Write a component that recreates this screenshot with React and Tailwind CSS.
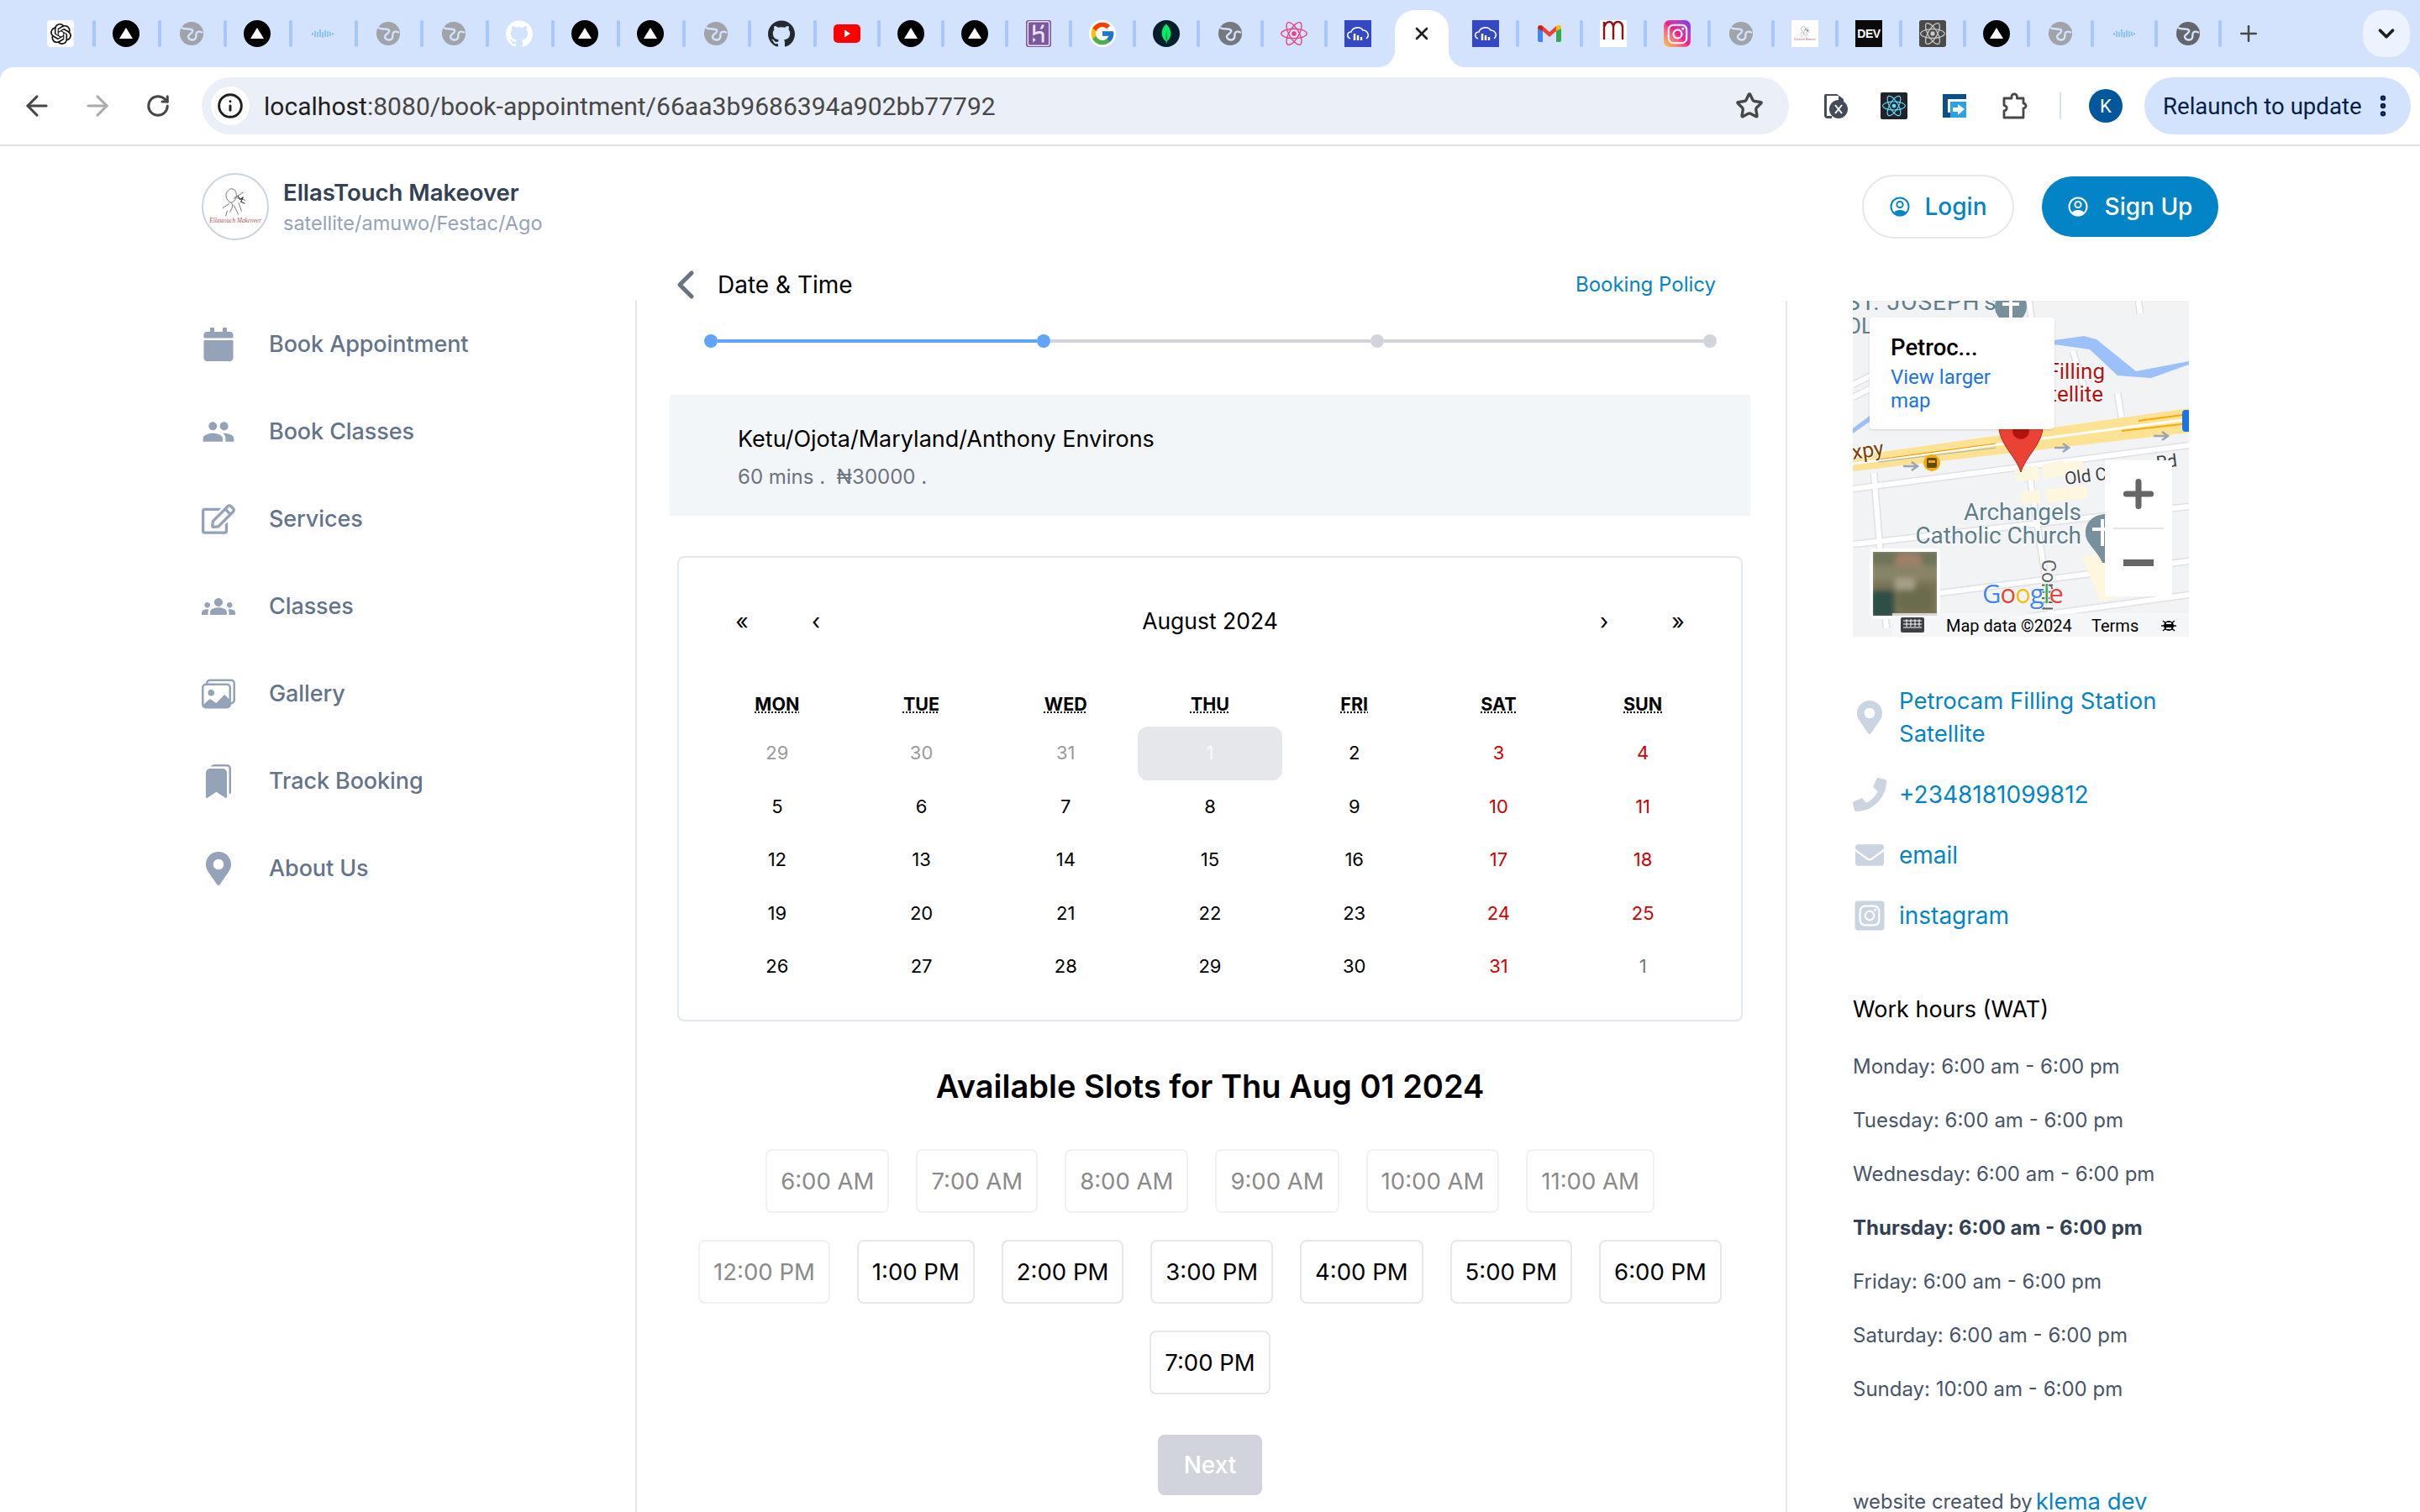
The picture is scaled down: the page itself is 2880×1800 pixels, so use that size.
import React from "react";
import { ArrowLeft, ArrowRight, RotateCw, Star, Info, EllipsisVertical, Plus, ChevronDown, ChevronLeft, X } from "lucide-react";
import { FaCalendar, FaRegEdit, FaMapMarkerAlt, FaPhone, FaEnvelope, FaInstagramSquare, FaReact, FaInstagram } from "react-icons/fa";
import { MdPeople, MdGroups } from "react-icons/md";
import { BsImages, BsBookmarksFill } from "react-icons/bs";
import { SiOpenai, SiGithub, SiHeroku, SiMongodb } from "react-icons/si";
import { FcGoogle } from "react-icons/fc";

const Vercel = () => (
  <svg viewBox="0 0 32 32" className="w-8 h-8"><circle cx="16" cy="16" r="16" fill="#000" /><path d="M16 9 L24 22 H8 Z" fill="#fff" /></svg>
);
const Globe = ({ c = "#a0a3a8" }) => (
  <svg viewBox="0 0 32 32" className="w-8 h-8">
    <circle cx="16" cy="16" r="14" fill={c} />
    <path d="M4 9 C9 12 15 9 17 12 C19 15 11 17 12 20 C13 24 19 25 21 21 C22 18 20 16 23 14 C25 13 27 14 29 15" fill="none" stroke="#d3e3fd" strokeWidth="2.4" />
  </svg>
);
const Wave = () => (
  <svg viewBox="0 0 32 32" className="w-8 h-8">
    <g stroke="#6ab0f7" strokeWidth="1.5" opacity="0.8">
      <path d="M4 15V18M7 13V20M10 14V20M13 11V20M16 14V21M19 12V20M22 13V20M25 14V19M28 15V18" />
    </g>
  </svg>
);
const Cloud = () => (
  <div className="w-8 h-8 bg-[#3448c5] flex items-center justify-center">
    <svg viewBox="0 0 32 32" className="w-8 h-8" fill="none" stroke="#fff" strokeWidth="1.6">
      <path d="M7 22 C2 20 3 14 8 14 C10 8 19 7 22 12 C27 12 31 18 26 22" />
      <path d="M12 16V24M16 18V24M20 20V24" strokeWidth="2.4" />
    </svg>
  </div>
);
const Gmail = () => (
  <svg viewBox="0 0 32 32" className="w-8 h-8">
    <path d="M2 10 V24 Q2 26 4 26 H8 V12 Z" fill="#4285f4" />
    <path d="M30 10 V24 Q30 26 28 26 H24 V12 Z" fill="#34a853" />
    <path d="M2 10 Q2 4 8 7 L16 14 L24 7 V13 L16 20 L8 13 L2 10Z" fill="#ea4335" />
    <path d="M2 10 Q2 5 8 7 V13 Z" fill="#c5221f" />
    <path d="M24 7 Q30 4 30 10 L24 13 Z" fill="#fbbc04" />
  </svg>
);
const YouTube = () => (
  <div className="w-8 h-[22px] rounded-[5px] bg-[#ff0000] flex items-center justify-center">
    <svg viewBox="0 0 12 12" className="w-3 h-3"><path d="M3 1.5 L10 6 L3 10.5Z" fill="#fff" /></svg>
  </div>
);
const LogoArt = () => (
  <svg viewBox="0 0 80 80" className="w-full h-full">
    <g fill="none" stroke="#333" strokeWidth="0.7">
      <path d="M32 19 C26 23 28 33 35 35 C38 39 36 42 33 47 M35 35 C41 33 43 26 40 20 C37 17 34 17 32 19" />
      <path d="M38 30 L50 22 M42 29 L53 32 M44 35 L48 46 M33 36 L24 42 M38 38 L44 50 M30 45 L28 52" />
      <path d="M43 26 L46 31 L50 28 L47 34 L52 36" strokeWidth="1.1" />
    </g>
    <text x="40" y="60" textAnchor="middle" fontFamily="Liberation Serif, serif" fontStyle="italic" fontSize="7.6" fill="#a85a5a">Ellastouch Makeover</text>
  </svg>
);
const UserIcon = () => (
  <svg viewBox="0 0 24 24" className="w-6 h-6 shrink-0" fill="none" stroke="currentColor" strokeWidth="2">
    <circle cx="12" cy="12" r="10.5" />
    <circle cx="12" cy="9.5" r="3.6" />
    <path d="M5 19 C7 15 17 15 19 19 C15.5 23 8.5 23 5 19Z" fill="currentColor" stroke="none" />
  </svg>
);
const PuzzleIcon = () => (
  <svg viewBox="0 0 32 32" className="w-8 h-8" fill="none" stroke="#474747" strokeWidth="2.8" strokeLinejoin="round">
    <path d="M3 7 H12 V5 a3.2 3.2 0 0 1 6.4 0 V7 H26 V13 a3 3 0 0 1 0 6 V30 H3 V22 a3.2 3.2 0 0 0 0 -6.4 Z" />
  </svg>
);

const Insta = () => (
  <div className="w-8 h-8 rounded-[7px] bg-linear-to-tr from-[#fdc830] via-[#f0198c] to-[#7a2cf5] flex items-center justify-center">
    <FaInstagram size={27} color="#fff" />
  </div>
);
const Box = ({ className, children }) => <div className={className}>{children}</div>;

const v = <Vercel />;
const g = <Globe />;
const w = <Wave />;
const firstTabs = [
  <Box className="w-8 h-8 bg-white rounded-[4px] flex items-center justify-center"><SiOpenai size={25} color="#111" /></Box>,
  v, g, v, w, g, g,
  <SiGithub size={32} color="#fff" />,
  v, v, g,
  <SiGithub size={32} color="#24292f" />,
];
const midTabs = [
  <YouTube />, v, v,
  <Box className="w-[30px] h-8 rounded-[3px] bg-[#79589f] flex items-center justify-center"><SiHeroku size={34} color="#e9e2f2" /></Box>,
  <FcGoogle size={32} className="bg-white rounded-full" />,
  <Box className="w-8 h-8 rounded-full bg-[#001e2b] flex items-center justify-center"><SiMongodb size={24} color="#00ed64" /></Box>,
  <Globe c="#75787d" />,
  <FaReact size={32} color="#e8407e" />,
];
const lastTabs = [
  <Cloud />, <Gmail />,
  <Box className="w-8 h-8 bg-white">
    <svg viewBox="0 0 32 32" className="w-8 h-8" fill="none" stroke="#8f1010" strokeWidth="2.4">
      <path d="M5 2 V23 M5 8 C8 0 15 0 16 8 V23 M16 8 C17 0 26 0 27 8 V23" />
    </svg>
  </Box>,
  <Insta />, g,
  <Box className="w-8 h-8 bg-white"><LogoArt /></Box>,
  <Box className="w-8 h-8 bg-[#0a0a0a] flex items-center justify-center"><span className="font-['Liberation_Sans'] font-bold text-white text-[14px] tracking-[-0.5px]">DEV</span></Box>,
  <Box className="w-8 h-8 rounded-[3px] bg-[#4a4a4a] flex items-center justify-center"><FaReact size={30} color="#c9c9c9" /></Box>,
  v, g, w, <Globe c="#63666b" />,
];

function Sep({ ml = "ml-5" }) {
  return <div className={`${ml} mr-5 w-1 h-8 rounded-[2px] bg-[#a8c7fa] shrink-0`} />;
}
function TabIcon({ children }) {
  return <div className="w-8 h-8 shrink-0 flex items-center justify-center">{children}</div>;
}

function TabStrip() {
  return (
    <div className="h-20 flex items-center pl-14">
      {firstTabs.map((t, i) => (
        <React.Fragment key={i}>
          <TabIcon>{t}</TabIcon>
          <Sep ml="ml-[22px]" />
        </React.Fragment>
      ))}
      {midTabs.map((t, i) => (
        <React.Fragment key={i}>
          <TabIcon>{t}</TabIcon>
          <Sep />
        </React.Fragment>
      ))}
      <TabIcon><Cloud /></TabIcon>
      <div className="relative self-end ml-7 mr-7 w-16 h-[68px] bg-white rounded-t-[24px] flex items-start justify-center pt-4 shrink-0">
        <X size={24} strokeWidth={2.6} color="#1f1f1f" />
        <svg viewBox="0 0 20 20" className="absolute -left-5 bottom-0 w-5 h-5"><path d="M20 0 V20 H0 A20 20 0 0 0 20 0Z" fill="#fff" /></svg>
        <svg viewBox="0 0 20 20" className="absolute -right-5 bottom-0 w-5 h-5"><path d="M0 0 V20 H20 A20 20 0 0 1 0 0Z" fill="#fff" /></svg>
      </div>
      {lastTabs.map((t, i) => (
        <React.Fragment key={i}>
          <TabIcon>{t}</TabIcon>
          <Sep />
        </React.Fragment>
      ))}
      <Plus size={30} strokeWidth={2} color="#474747" className="shrink-0 -ml-[3px]" />
      <div className="ml-auto mr-3 self-start mt-3 w-14 h-14 rounded-[24px] bg-[#ecf2fe] flex items-center justify-center shrink-0">
        <ChevronDown size={30} strokeWidth={3} color="#1f1f1f" />
      </div>
    </div>
  );
}

function Toolbar() {
  return (
    <div className="h-[94px] bg-white rounded-t-[16px] border-b-2 border-[#e1e1e1] flex items-center pl-6 font-['Roboto']">
      <div className="w-10 flex justify-center"><ArrowLeft size={38} strokeWidth={1.9} color="#474747" /></div>
      <div className="w-10 ml-8 flex justify-center"><ArrowRight size={38} strokeWidth={1.9} color="#a9abae" /></div>
      <div className="w-10 ml-8 flex justify-center"><RotateCw size={30} strokeWidth={2.4} color="#474747" /></div>
      <div className="ml-8 w-[1889px] h-[68px] rounded-full bg-[#ebeff8] flex items-center pl-[11px] pr-[30px]">
        <div className="w-[46px] h-[46px] rounded-full bg-white flex items-center justify-center">
          <Info size={32} strokeWidth={2.2} color="#1f1f1f" />
        </div>
        <div className="ml-[17px] mt-[1px] text-[30px] tracking-[0.03px] leading-[40px] text-[#474747]"><span className="text-[#1f1f1f]">localhost</span>:8080/book-appointment/66aa3b9686394a902bb77792</div>
        <Star size={34} strokeWidth={2.4} color="#474747" className="ml-auto" />
      </div>
      <div className="ml-[39px] w-8 h-8 flex items-center justify-center">
        <svg viewBox="0 0 32 32" className="w-8 h-8">
          <path d="M4 2 H18 L26 8 V14 H20 L20 4 H6 V28 H12 V31 H7 Q3 31 3 27 V6 Q3 2 4 2Z" fill="#444c5c" />
          <circle cx="20" cy="20" r="11" fill="#444c5c" />
          <path d="M16 15 L24 25 M24 15 L16 25" stroke="#fff" strokeWidth="2" />
        </svg>
      </div>
      <div className="ml-[38px] w-8 h-8 bg-[#20232a] rounded-[2px] flex items-center justify-center"><FaReact size={28} color="#61dafb" /></div>
      <div className="ml-10 w-8 h-8 flex items-center justify-center">
        <svg viewBox="0 0 32 32" className="w-8 h-8">
          <path d="M2 2 H30 V8 H8 V24 H12 V30 H2Z" fill="#0e4f86" />
          <path d="M11 11 H30 V30 H11Z" fill="#2aa3e6" />
          <path d="M14 18 H20 V14 L28 20 L20 27 V23 H14Z" fill="#fff" />
        </svg>
      </div>
      <div className="ml-10 w-8 h-8 flex items-center justify-center"><PuzzleIcon /></div>
      <div className="ml-[37px] w-[2px] h-8 bg-[#d3e3fd]" />
      <div className="ml-[33px] w-10 h-10 rounded-full bg-[#01579b] text-white text-[22px] flex items-center justify-center">K</div>
      <div className="ml-[26px] w-[317px] h-[68px] rounded-full bg-[#d3e3fd] flex items-center pl-[22px] text-[27.6px] text-[#041e49]">
        <span className="mt-[1px]">Relaunch to update</span>
        <EllipsisVertical size={32} strokeWidth={2.8} color="#041e49" className="ml-[9px]" />
      </div>
    </div>
  );
}

const navItems = [
  ["Book Appointment", <FaCalendar size={40} />],
  ["Book Classes", <MdPeople size={40} />],
  ["Services", <FaRegEdit size={40} />],
  ["Classes", <MdGroups size={40} />],
  ["Gallery", <BsImages size={40} />],
  ["Track Booking", <BsBookmarksFill size={40} />],
  ["About Us", <FaMapMarkerAlt size={40} />],
];

function Sidebar() {
  return (
    <div className="w-[518px] shrink-0 border-r-2 border-[#e5e7eb]">
      {navItems.map(([t, ic]) => (
        <div key={t} className="h-[104px] flex items-center">
          <div className="w-10 flex justify-center text-[#94a3b8]">{ic}</div>
          <span className="ml-10 mt-[1px] text-[27px] tracking-[-0.1px] font-medium text-[#64748b]">{t}</span>
        </div>
      ))}
    </div>
  );
}

const weekdays = ["MON", "TUE", "WED", "THU", "FRI", "SAT", "SUN"];
const days = [29, 30, 31, 1, 2, 3, 4, 5, 6, 7, 8, 9, 10, 11, 12, 13, 14, 15, 16, 17, 18, 19, 20, 21, 22, 23, 24, 25, 26, 27, 28, 29, 30, 31, 1];

function dayClass(i) {
  if (i < 3) return "text-[#9a9a9a]";
  if (i === 3) return "text-[#f9fafb] bg-[#e5e7eb] rounded-[12px]";
  if (i === 34) return "text-[#757575]";
  if (i % 7 >= 5) return "text-[#d10000]";
  return "text-black";
}

function Calendar() {
  return (
    <div className="ml-12 w-[1268px] h-[554px] border-2 border-[#e2e8f0] rounded-[8px] px-[31px] pt-12">
      <div className="h-14 flex items-center text-[26.5px] text-black">
        <div className="w-[88px] text-center">«</div>
        <div className="w-[88px] text-center">‹</div>
        <div className="flex-1 text-center">August 2024</div>
        <div className="w-[88px] text-center">›</div>
        <div className="w-[88px] text-center">»</div>
      </div>
      <div className="mt-[50px] grid grid-cols-7 h-10 items-center text-center">
        {weekdays.map((d) => (
          <abbr key={d} title={d} className="text-[21.5px] font-bold text-black underline decoration-dotted">{d}</abbr>
        ))}
      </div>
      <div className="mt-[7px] grid grid-cols-7 auto-rows-[63.5px]">
        {days.map((d, i) => (
          <div key={i} className={`flex items-center justify-center text-[22px] ${dayClass(i)}`}>{d}</div>
        ))}
      </div>
    </div>
  );
}

const slots = [
  ["6:00 AM", 1], ["7:00 AM", 1], ["8:00 AM", 1], ["9:00 AM", 1], ["10:00 AM", 1], ["11:00 AM", 1],
  ["12:00 PM", 1], ["1:00 PM", 0], ["2:00 PM", 0], ["3:00 PM", 0], ["4:00 PM", 0], ["5:00 PM", 0], ["6:00 PM", 0], ["7:00 PM", 0],
];

function Center() {
  return (
    <div className="w-[1369px] shrink-0 border-r-2 border-[#e5e7eb]">
      <div className="ml-20 w-[1205px] mt-10 h-4 flex items-center">
        <div className="w-4 h-4 rounded-full bg-[#60a5fa] shrink-0" />
        <div className="flex-1 h-1 bg-[#60a5fa]" />
        <div className="w-4 h-4 rounded-full bg-[#60a5fa] shrink-0" />
        <div className="flex-1 h-1 bg-[#d1d5db]" />
        <div className="w-4 h-4 rounded-full bg-[#d1d5db] shrink-0" />
        <div className="flex-1 h-1 bg-[#d1d5db]" />
        <div className="w-4 h-4 rounded-full bg-[#d1d5db] shrink-0" />
      </div>
      <div className="ml-[39px] mt-14 w-[1286px] h-[144px] bg-[#f3f6f9] pl-[81px] pt-[34px]">
        <div className="text-[27px] leading-[38px] text-black">Ketu/Ojota/Maryland/Anthony Environs</div>
        <div className="mt-[7px] text-[24px] leading-[38px] text-[#6b7280] whitespace-pre">60 mins .  ₦30000 .</div>
      </div>
      <div className="mt-12"><Calendar /></div>
      <div className="ml-12 w-[1268px] mt-[49px] h-14 flex items-center justify-center text-[38px] font-semibold text-black">Available Slots for Thu Aug 01 2024</div>
      <div className="ml-16 w-[1236px] mt-[47px] flex flex-wrap justify-center gap-x-8 gap-y-8">
        {slots.map(([t, dis]) =>
          dis ? (
            <div key={t} className="h-[76px] px-4 pt-[1px] border-2 border-[#f0f1f3] rounded-[8px] flex items-center text-[27.5px] text-[#8a8a8a]">{t}</div>
          ) : (
            <div key={t} className="h-[76px] px-4 pt-[1px] border-2 border-[#e5e7eb] rounded-[8px] flex items-center text-[27.5px] text-black">{t}</div>
          )
        )}
      </div>
      <div className="mt-12 ml-[620px] w-[124px] h-[72px] rounded-[8px] bg-[#d1d5db] flex items-center justify-center text-[28px] font-medium text-white">Next</div>
    </div>
  );
}

function MapBox() {
  return (
    <div className="relative w-[400px] h-[400px] overflow-hidden bg-[#f1f3f4] font-['Roboto']">
      <svg viewBox="0 0 400 400" className="absolute inset-0 w-[400px] h-[400px]" fontFamily="Roboto, sans-serif">
        <defs>
          <filter id="sat"><feGaussianBlur stdDeviation="3" /></filter>
          <clipPath id="satclip"><rect x="24" y="299" width="76" height="76" /></clipPath>
        </defs>
        <g fill="none" stroke="#dfe1e5" strokeWidth="9">
          <path d="M0 224 L400 172" /><path d="M210 0 L215 45 L170 62 L60 70 L0 100" /><path d="M262 60 L280 120" />
          <path d="M25 205 L40 390" /><path d="M0 290 L400 245" /><path d="M50 355 L400 310" /><path d="M110 390 L400 350" />
          <path d="M210 205 L240 400" /><path d="M0 115 L20 105" /><path d="M340 0 L342 15" /><path d="M315 110 L320 140" />
        </g>
        <g fill="none" stroke="#fff" strokeWidth="6">
          <path d="M0 224 L400 172" /><path d="M210 0 L215 45 L170 62 L60 70 L0 100" /><path d="M262 60 L280 120" />
          <path d="M25 205 L40 390" /><path d="M0 290 L400 245" /><path d="M50 355 L400 310" /><path d="M110 390 L400 350" />
          <path d="M210 205 L240 400" /><path d="M0 115 L20 105" /><path d="M340 0 L342 15" /><path d="M315 110 L320 140" />
        </g>
        <g fill="#fef7e0">
          <path d="M192 200 L220 196 L222 213 L195 215Z" /><path d="M225 195 L250 190 L252 193 L273 190 L275 205 L228 212Z" />
          <path d="M198 227 L222 225 L224 240 L202 242Z" /><path d="M228 225 L278 220 L280 235 L232 240Z" />
          <path d="M272 305 L300 300 L320 352 L295 358Z" />
        </g>
        <path d="M240 47 L275 42 L290 46 L337 84 L400 72 L400 76 L355 92 L315 89 L282 58 L240 52Z" fill="#9cc0f9" />
        <path d="M0 152 L20 137 L20 144 L0 158Z" fill="#9cc0f9" />
        <path d="M0 185 L400 128 L400 157 L0 203Z" fill="#fde293" />
        <path d="M0 194 L400 141" stroke="#fff" strokeWidth="3" fill="none" />
        <path d="M30 189 L170 170" stroke="#f29900" strokeWidth="1.2" fill="none" />
        <path d="M30 192 L170 175" stroke="#aaa" strokeWidth="1" fill="none" />
        <path d="M340 143 L400 135 M320 155 L400 146" stroke="#f9ab00" strokeWidth="2" fill="none" />
        <g stroke="#9aa5b1" strokeWidth="2.5" fill="none">
          <path d="M60 197 H76 M70 192 L77 197 L70 202" /><path d="M240 175 H256 M250 170 L257 175 L250 180" /><path d="M358 161 H374 M368 156 L375 161 L368 166" />
        </g>
        <circle cx="94" cy="193" r="10" fill="#f9ab00" />
        <rect x="88" y="187" width="12" height="12" rx="2" fill="#5f4b00" />
        <rect x="90" y="190" width="8" height="3" fill="#f9ab00" />
        <path d="M174 150 H226 C226 170 206 185 200 204 C194 185 174 170 174 150Z" fill="#ea4335" stroke="#b3261e" strokeWidth="1" />
        <circle cx="200" cy="155" r="10" fill="#b3140e" />
        <rect x="392" y="130" width="10" height="26" rx="4" fill="#1a73e8" />
        <text x="-8" y="11" fontSize="28" fill="#607d8b" letterSpacing="1">ST. JOSEPH's</text>
        <circle cx="188" cy="7" r="19" fill="#78909c" /><path d="M188 -8 V20 M178 4 H198" stroke="#fff" strokeWidth="4" />
        <text x="-8" y="39" fontSize="26" fill="#607d8b">OL</text>
        <text x="300" y="93" textAnchor="end" fontSize="26" fill="#b31412" stroke="#fff" strokeWidth="2" paintOrder="stroke">Filling</text>
        <text x="298" y="120" textAnchor="end" fontSize="26" fill="#b31412" stroke="#fff" strokeWidth="2" paintOrder="stroke">Satellite</text>
        <text x="0" y="189" fontSize="25" fill="#7b4000" stroke="#fff" strokeWidth="2" paintOrder="stroke" transform="rotate(-8 0 189)">xpy</text>
        <text x="253" y="219" fontSize="21" fill="#3c4043" stroke="#fff" strokeWidth="2" paintOrder="stroke" transform="rotate(-7 253 219)">Old Corn</text>
        <text x="362" y="200" fontSize="21" fill="#3c4043" transform="rotate(-7 362 200)">Rd</text>
        <text x="272" y="261" textAnchor="end" fontSize="28" fill="#5b7d8c" stroke="#fff" strokeWidth="2" paintOrder="stroke">Archangels</text>
        <text x="272" y="289" textAnchor="end" fontSize="28" fill="#5b7d8c" stroke="#fff" strokeWidth="2" paintOrder="stroke">Catholic Church</text>
        <path d="M302 254 C286 254 276 264 277 278 C278 290 290 296 297 312 L302 312Z M302 254 H306 V310 H302Z" fill="#78909c" />
        <path d="M297 260 V292 M285 272 H305" stroke="#fff" strokeWidth="4" />
        <text x="225" y="308" fontSize="23" fill="#5f6368" stroke="#fff" strokeWidth="2" paintOrder="stroke" transform="rotate(90 225 308)">Cornu</text>
        <rect x="20" y="295" width="84" height="84" rx="4" fill="#fff" />
        <g clipPath="url(#satclip)">
          <g filter="url(#sat)">
            <rect x="20" y="295" width="84" height="84" fill="#7a7356" />
            <rect x="20" y="295" width="84" height="20" fill="#6e7458" />
            <rect x="50" y="300" width="32" height="24" rx="8" fill="#a07f68" />
            <rect x="20" y="315" width="84" height="18" fill="#888468" />
            <rect x="20" y="344" width="30" height="35" rx="6" fill="#2f4f44" />
            <rect x="54" y="340" width="40" height="30" rx="8" fill="#6a6c4e" />
            <rect x="50" y="330" width="24" height="14" rx="4" fill="#a59f86" />
          </g>
        </g>
        <text x="154" y="360" fontSize="31" fontFamily="Open Sans, sans-serif" stroke="#fff" strokeWidth="2" paintOrder="stroke" letterSpacing="-1">
          <tspan fill="#4285f4">G</tspan><tspan fill="#ea4335">o</tspan><tspan fill="#fbbc04">o</tspan><tspan fill="#4285f4">g</tspan><tspan fill="#34a853">l</tspan><tspan fill="#ea4335">e</tspan>
        </text>
        <rect x="47" y="372" width="353" height="28" fill="#f6f7f8" fillOpacity="0.75" />
        <rect x="57" y="377" width="28" height="18" rx="2" fill="#3c4043" />
        <path d="M60 381 H82 M60 385 H82 M60 389 H82 M64 379 V388 M69 379 V388 M74 379 V388 M79 379 V388" stroke="#fff" strokeWidth="1" />
        <text x="111" y="394" fontSize="20" fill="#000">Map data ©2024</text>
        <text x="284" y="394" fontSize="20" fill="#000">Terms</text>
        <circle cx="376" cy="387" r="6" fill="#000" />
        <path d="M369 381 L383 393 M383 381 L369 393 M367 387 H385" stroke="#000" strokeWidth="1.5" />
        <rect x="373" y="383" width="6" height="2" fill="#fff" /><rect x="373" y="389" width="6" height="2" fill="#fff" />
      </svg>
      <div className="absolute left-5 top-5 w-[220px] h-[133px] bg-white rounded-[4px] pl-[25px] pt-[21px] shadow-sm">
        <div className="text-[27.5px] leading-[30px] font-medium text-black">Petroc...</div>
        <div className="mt-[6px] w-[130px] text-[24px] leading-[28px] text-[#1a73e8]">View larger map</div>
      </div>
      <div className="absolute left-[300px] top-[190px] w-20 h-[162px] bg-white flex flex-col items-center">
        <div className="h-20 flex items-center justify-center"><Plus size={50} strokeWidth={3.4} color="#666" /></div>
        <div className="w-[60px] h-[2px] bg-[#e6e6e6]" />
        <div className="flex-1 flex items-center justify-center"><div className="w-9 h-2 bg-[#666]" /></div>
      </div>
    </div>
  );
}

const hours = [
  ["Monday: 6:00 am - 6:00 pm"], ["Tuesday: 6:00 am - 6:00 pm"], ["Wednesday: 6:00 am - 6:00 pm"], ["Thursday: 6:00 am - 6:00 pm", 1],
  ["Friday: 6:00 am - 6:00 pm"], ["Saturday: 6:00 am - 6:00 pm"], ["Sunday: 10:00 am - 6:00 pm"],
];

function RightCol() {
  return (
    <div className="pl-[78px] flex-1">
      <MapBox />
      <div className="mt-[57px] h-[78px] flex items-center gap-[15px]">
        <div className="w-10 flex justify-center text-[#cbd5e1]"><FaMapMarkerAlt size={40} /></div>
        <div className="text-[27.5px] leading-[39px] text-[#0284c7] w-[320px]">Petrocam Filling Station Satellite</div>
      </div>
      <div className="mt-[33px] h-10 flex items-center gap-[15px]">
        <div className="w-10 flex justify-center text-[#cbd5e1]"><FaPhone size={40} /></div>
        <div className="text-[28px] text-[#0284c7]">+2348181099812</div>
      </div>
      <div className="mt-8 h-10 flex items-center gap-[15px]">
        <div className="w-10 flex justify-center text-[#cbd5e1]"><FaEnvelope size={34} /></div>
        <div className="text-[28px] text-[#0284c7]">email</div>
      </div>
      <div className="mt-8 h-10 flex items-center gap-[15px]">
        <div className="w-10 flex justify-center text-[#cbd5e1]"><FaInstagramSquare size={40} /></div>
        <div className="text-[28px] text-[#0284c7]">instagram</div>
      </div>
      <div className="mt-[72px] h-10 flex items-center text-[27px] text-black">Work hours (WAT)</div>
      <div className="mt-4">
        {hours.map(([t, b]) => (
          <div key={t} className={b ? "h-16 flex items-center text-[24px] font-bold text-[#334155]" : "h-16 flex items-center text-[24px] text-[#475569]"}>{t}</div>
        ))}
      </div>
      <div className="mt-[82px] h-10 flex items-center gap-[4px] text-[23.8px] text-[#475569]">
        website created by <span className="text-[27.5px] text-[#0284c7]">klema dev</span>
      </div>
    </div>
  );
}

export default function App() {
  return (
    <div className="w-[2880px] h-[1800px] overflow-hidden bg-white font-['Inter'] flex flex-col">
      <div className="bg-[#d3e3fd]">
        <TabStrip />
        <Toolbar />
      </div>
      <div className="h-[136px] shrink-0 pl-60 pr-60 pt-8">
        <div className="h-20 flex items-center">
          <div className="w-20 h-20 rounded-full border-2 border-[#cbd5e1] overflow-hidden"><LogoArt /></div>
          <div className="ml-[17px] pt-[2px]">
            <div className="text-[27.5px] leading-[36px] font-semibold text-[#334155]">EllasTouch Makeover</div>
            <div className="text-[23.5px] leading-[37px] text-[#94a3b8]">satellite/amuwo/Festac/Ago</div>
          </div>
          <div className="ml-auto h-[76px] w-[181px] rounded-full border-2 border-[#e5e7eb] flex items-center justify-center gap-[18px] text-[28px] font-medium text-[#0284c7]">
            <UserIcon />Login
          </div>
          <div className="ml-[33px] h-[72px] w-[210px] rounded-full bg-[#0284c7] flex items-center justify-center gap-[20px] text-[28px] font-medium text-white">
            <UserIcon />Sign Up
          </div>
        </div>
      </div>
      <div className="h-12 shrink-0 ml-[806px] w-[1236px] pt-[10px] flex items-center justify-between">
        <div className="flex items-center">
          <ChevronLeft size={56} strokeWidth={2.2} color="#6b7280" className="-ml-[18px]" />
          <span className="ml-[10px] text-[28px] text-black">Date &amp; Time</span>
        </div>
        <span className="text-[24px] text-[#0284c7]">Booking Policy</span>
      </div>
      <div className="flex-1 flex pl-60 min-h-0">
        <Sidebar />
        <Center />
        <RightCol />
      </div>
    </div>
  );
}
